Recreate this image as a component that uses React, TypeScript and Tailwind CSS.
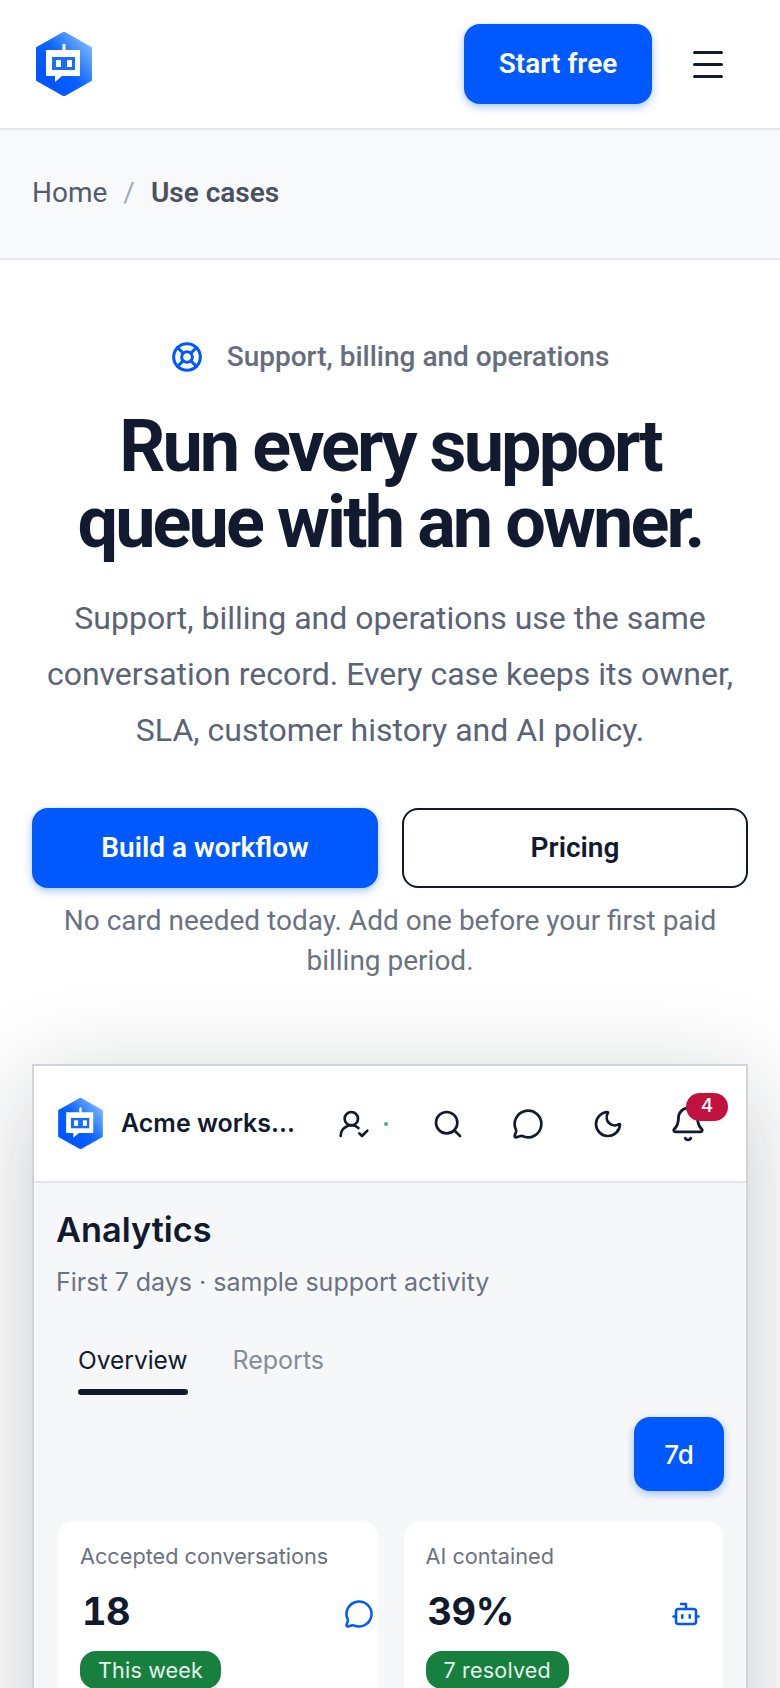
import React from "react";
import { LifeBuoy, UserRoundCheck, Search, MessageCircle, Moon, Bell, Bot } from "lucide-react";

function Logo({ className }: { className: string }) {
  const id = className.includes("w-[56px]") ? "lgA" : "lgB";
  return (
    <svg viewBox="0 0 56 64" className={className}>
      <defs>
        <linearGradient id={id} x1="0.95" y1="0.15" x2="0.25" y2="0.8">
          <stop offset="0" stopColor="#7ab8ff" />
          <stop offset="0.6" stopColor="#0a62ff" />
          <stop offset="1" stopColor="#0057ff" />
        </linearGradient>
      </defs>
      <path d="M28 0 L55.5 15.5 L55.5 48.5 L28 64 L0.5 48.5 L0.5 15.5 Z" fill={`url(#${id})`} stroke={`url(#${id})`} strokeWidth="1" strokeLinejoin="round" />
      <path d="M26.5 12.5 a1.8 1.8 0 0 1 3 0 V18 H44 V44 H26 L19 50 V44 H10 V18 H26.5 Z" fill="#fff" />
      <rect x="16" y="25" width="23" height="13" fill="#1a6bff" />
      <rect x="20" y="28" width="5" height="7" fill="#fff" />
      <rect x="31" y="28" width="5" height="7" fill="#fff" />
    </svg>
  );
}

function Stat({ label, value, pill, icon, iconClass }: { label: string; value: string; pill: string; icon: React.ReactNode; iconClass: string }) {
  return (
    <div className="bg-white rounded-[16px] pt-[20px] pl-[22px] h-[260px]">
      <div className="text-[21.7px] leading-[30px] text-[#6b7280]">{label}</div>
      <div className={`flex items-center justify-between mt-[17px] pl-[2px] ${iconClass}`}>
        <span className="text-[38px] leading-[46px] font-bold text-[#111a2e] tabular-nums tracking-[-0.5px]">{value}</span>
        <span className="text-[#0059ff] mt-[6px]">{icon}</span>
      </div>
      <span className="inline-flex items-center mt-[17px] h-[38px] px-[18px] rounded-[16px] bg-[#18803f] text-white/90 text-[21.5px] tracking-[0.2px]">{pill}</span>
    </div>
  );
}

export default function App() {
  return (
    <div className="w-[780px] h-[1688px] overflow-hidden bg-white font-['Inter','Noto_Sans',sans-serif] text-[#111a2e]">
      <header className="h-[130px] border-b-2 border-[#e4e6ec] flex items-center pl-[36px] pr-[57px]">
        <Logo className="w-[56px] h-[64px]" />
        <div className="ml-auto flex items-center gap-[41px]">
          <button className="w-[188px] h-[80px] rounded-[16px] bg-[#0059ff] text-white text-[28px] font-semibold font-['Roboto',sans-serif] shadow-[0_3px_8px_rgba(0,89,255,0.35)]">Start free</button>
          <div className="w-[30px] flex flex-col gap-[9px]">
            <span className="h-[3px] rounded bg-[#111a2e]" />
            <span className="h-[3px] rounded bg-[#111a2e]" />
            <span className="h-[3px] rounded bg-[#111a2e]" />
          </div>
        </div>
      </header>
      <nav className="h-[130px] bg-[#f8f9fb] border-b-2 border-[#e4e6ec] flex items-center px-[32px] font-['Roboto',sans-serif] pb-[2px] text-[28px]">
        <span className="text-[#555b6b]">Home</span>
        <span className="text-[#a4a8b3] mx-[16px]">/</span>
        <span className="text-[#4a5060] font-semibold">Use cases</span>
      </nav>
      <main className="px-[32px] pt-[81px]">
        <div className="flex items-center justify-center gap-[24px] h-[32px] text-[28px] font-medium text-[#666d7d] font-['Roboto',sans-serif]">
          <LifeBuoy className="w-[32px] h-[32px] text-[#0059ff]" strokeWidth={2.3} />
          <span>Support, billing and operations</span>
        </div>
        <h1 className="mt-[36px] text-center text-[72px] leading-[76px] font-bold tracking-[-2.88px] text-[#111a2e] font-['Roboto',sans-serif]">
          Run every support<br />queue with an owner.
        </h1>
        <p className="mt-[29px] text-center text-[32px] leading-[56px] text-[#5b6374] font-['Roboto',sans-serif]">
          Support, billing and operations use the same conversation record. Every case keeps its owner, SLA, customer history and AI policy.
        </p>
        <div className="mt-[50px] grid grid-cols-2 gap-[24px]">
          <button className="h-[80px] rounded-[16px] bg-[#0059ff] text-white text-[28px] font-semibold font-['Roboto',sans-serif] shadow-[0_3px_8px_rgba(0,89,255,0.35)]">Build a workflow</button>
          <button className="h-[80px] rounded-[16px] bg-white border-2 border-[#111a2e] text-[#111a2e] text-[28px] font-semibold font-['Roboto',sans-serif]">Pricing</button>
        </div>
        <p className="mt-[13px] text-center text-[28px] leading-[40px] text-[#6b7280] px-[20px] font-['Roboto',sans-serif]">
          No card needed today. Add one before your first paid billing period.
        </p>
        <section className="mt-[83px] border-2 border-[#cfd3da] bg-[#f6f7f9] shadow-[0_24px_96px_rgba(17,24,39,0.24)] h-[800px]">
          <div className="h-[117px] bg-white border-b-2 border-[#e4e6ec] flex items-center pl-[24px] pr-[24px]">
            <Logo className="w-[45px] h-[51px]" />
            <span className="ml-[18px] text-[25px] font-semibold whitespace-nowrap w-[170px]">Acme works...</span>
            <div className="ml-[47px] flex items-center relative">
              <UserRoundCheck className="w-[32px] h-[32px]" strokeWidth={2} />
              <span className="ml-[14px] w-[4px] h-[4px] rounded-full bg-[#4fb477]" />
              <Search className="ml-[44px] w-[32px] h-[32px]" strokeWidth={2} />
              <MessageCircle className="ml-[48px] w-[32px] h-[32px]" strokeWidth={2} />
              <Moon className="ml-[48px] w-[32px] h-[32px]" strokeWidth={2} />
              <span className="relative ml-[45px]">
                <Bell className="w-[38px] h-[38px]" strokeWidth={1.8} />
                <span className="absolute -top-[12px] left-[17px] w-[42px] h-[28px] rounded-full bg-[#c1123f] text-white text-[19px] font-medium flex items-center justify-center">4</span>
              </span>
            </div>
          </div>
          <div className="pl-[22px] pr-[22px] pt-[25px]">
            <h2 className="text-[34.3px] leading-[44px] font-semibold">Analytics</h2>
            <p className="mt-[12px] text-[25px] leading-[36px] text-[#6b7280]">First 7 days · sample support activity</p>
            <div className="mt-[42px] flex gap-[45px] pl-[22px] text-[25px] leading-[36px]">
              <div>
                <div className="text-[#111a2e] text-[24.5px]">Overview</div>
                <div className="mt-[11px] h-[6px] rounded bg-[#111a2e]" />
              </div>
              <div className="text-[#858b98]">Reports</div>
            </div>
            <div className="mt-[22px] flex justify-end">
              <button className="w-[90px] h-[74px] rounded-[16px] bg-[#0059ff] text-white text-[26px] font-medium shadow-[0_3px_8px_rgba(0,89,255,0.35)]">7d</button>
            </div>
            <div className="mt-[30px] grid grid-cols-2 gap-[26px] pl-[2px] pr-[1px]">
              <Stat label="Accepted conversations" value="18" pill="This week" icon={<MessageCircle className="w-[30px] h-[30px]" strokeWidth={2} />} iconClass="pr-[4px]" />
              <Stat label="AI contained" value="39%" pill="7 resolved" icon={<Bot className="w-[30px] h-[30px]" strokeWidth={2} />} iconClass="pr-[22px]" />
            </div>
          </div>
        </section>
      </main>
    </div>
  );
}
